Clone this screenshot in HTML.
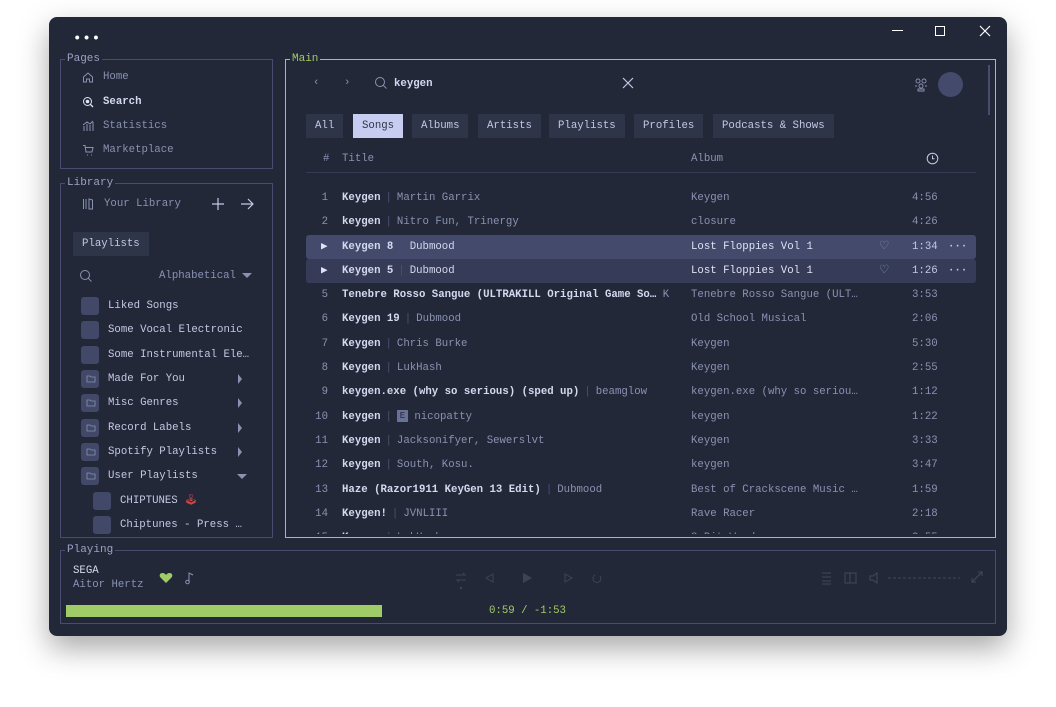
<!DOCTYPE html>
<html><head><meta charset="utf-8"><style>
*{margin:0;padding:0;box-sizing:border-box}
body{width:1056px;height:707px;background:#fff;position:relative;overflow:hidden;font-family:"Liberation Mono","DejaVu Sans Mono",monospace;font-size:10.7px;line-height:16px;color:#c3c9e4}
.win{position:absolute;left:49px;top:17px;width:958px;height:619px;background:#232839;border-radius:8px;box-shadow:0 12px 30px rgba(0,0,0,.35)}
.a{position:absolute;white-space:nowrap}
.box{position:absolute;border:1px solid #474d70}
.lbl{position:absolute;background:#232839;padding:0 2px;color:#9aa2c4;font-size:11px;line-height:12px}
.dim{color:#8a92b2}
.b{font-weight:bold;color:#d4d9ef}
.chip{position:absolute;top:114px;height:24px;background:#2f3549;line-height:25px;padding:0 9px;color:#c3c9e4}
.sq{position:absolute;width:18px;height:18px;background:#414868;border-radius:3px}
.row{position:absolute;left:306px;width:670px;height:23px}
.sep{color:#4a5072;margin:0 5px}
</style></head><body>
<div class="win"></div>
<div class="a" style="left:73px;top:31px;color:#fff;font-size:14px;letter-spacing:1px;font-weight:bold">•••</div>
<div class="a" style="left:892px;top:30px;width:11px;height:1px;background:#fff"></div>
<div class="a" style="left:935px;top:26px;width:10px;height:10px;border:1px solid #fff"></div>
<svg class="a" style="left:979px;top:25px" width="12" height="12"><path d="M1 1L11 11M11 1L1 11" stroke="#fff" stroke-width="1.2"/></svg>

<div class="box" style="left:60px;top:59px;width:213px;height:110px"></div>
<div class="lbl" style="left:65px;top:53px">Pages</div>
<svg class="a" style="left:82px;top:71px" width="12" height="12"><path d="M1.5 6L6 2L10.5 6V11H7.5V8H4.5V11H1.5Z" fill="none" stroke="#8a92b2"/></svg>
<div class="a dim" style="left:103px;top:69px">Home</div>
<svg class="a" style="left:82px;top:96px" width="12" height="12"><circle cx="5.5" cy="5.5" r="4" fill="none" stroke="#dfe3f5"/><circle cx="5.5" cy="5.5" r="1.8" fill="#dfe3f5"/><path d="M8.5 8.5L11 11" stroke="#dfe3f5" stroke-width="1.3"/></svg>
<div class="a b" style="left:103px;top:94px">Search</div>
<svg class="a" style="left:82px;top:120px" width="12" height="12"><path d="M2 11V6M5 11V4M8 11V5M11 11V2M1 5L5 2L8 4L11 1" stroke="#8a92b2" fill="none"/></svg>
<div class="a dim" style="left:103px;top:118px">Statistics</div>
<svg class="a" style="left:82px;top:144px" width="12" height="12"><path d="M1 1.5H3L4 8H10L11 3.5H3.5M5 11h1M9 11h1" stroke="#8a92b2" fill="none"/></svg>
<div class="a dim" style="left:103px;top:142px">Marketplace</div>

<div class="box" style="left:60px;top:183px;width:213px;height:355px"></div>
<div class="lbl" style="left:65px;top:177px">Library</div>
<svg class="a" style="left:82px;top:198px" width="12" height="12"><path d="M1.5 1V11M4 1V11M7 1L10.5 2V11H7Z" stroke="#8a92b2" fill="none"/></svg>
<div class="a dim" style="left:104px;top:196px">Your Library</div>
<svg class="a" style="left:211px;top:197px" width="14" height="14"><path d="M7 1V13M1 7H13" stroke="#c3c9e4" stroke-width="1.2"/></svg>
<svg class="a" style="left:240px;top:197px" width="15" height="14"><path d="M1 7H13M8 2L13 7L8 12" stroke="#c3c9e4" stroke-width="1.2" fill="none"/></svg>
<div class="a" style="left:73px;top:232px;width:76px;height:24px;background:#2f3549;line-height:25px;padding-left:9px">Playlists</div>
<svg class="a" style="left:79px;top:269px" width="14" height="14"><circle cx="6" cy="6" r="4.5" fill="none" stroke="#8a92b2"/><path d="M9.3 9.3L12.5 12.5" stroke="#8a92b2"/></svg>
<div class="a dim" style="left:159px;top:268px">Alphabetical</div>
<svg class="a" style="left:242px;top:273px" width="10" height="6"><path d="M0 0H10L5 5Z" fill="#8a92b2"/></svg>

<div class="sq" style="left:81px;top:297px"></div><div class="a" style="left:108px;top:298px">Liked Songs</div>
<div class="sq" style="left:81px;top:321px"></div><div class="a" style="left:108px;top:322px">Some Vocal Electronic</div>
<div class="sq" style="left:81px;top:346px"></div><div class="a" style="left:108px;top:347px">Some Instrumental Ele…</div>
<div class="sq" style="left:81px;top:370px"></div><div class="a" style="left:108px;top:371px">Made For You</div>
<div class="sq" style="left:81px;top:394px"></div><div class="a" style="left:108px;top:395px">Misc Genres</div>
<div class="sq" style="left:81px;top:419px"></div><div class="a" style="left:108px;top:420px">Record Labels</div>
<div class="sq" style="left:81px;top:443px"></div><div class="a" style="left:108px;top:444px">Spotify Playlists</div>
<div class="sq" style="left:81px;top:467px"></div><div class="a" style="left:108px;top:468px">User Playlists</div>
<svg class="a" style="left:86px;top:373px" width="10" height="110"><g fill="none" stroke="#8a92b2" stroke-width=".8"><path d="M1 3H4L5 4H9V9H1Z"/><path d="M1 27H4L5 28H9V33H1Z"/><path d="M1 52H4L5 53H9V58H1Z"/><path d="M1 76H4L5 77H9V82H1Z"/><path d="M1 100H4L5 101H9V106H1Z"/></g></svg>
<svg class="a" style="left:237px;top:374px" width="12" height="110"><g fill="#8a92b2"><path d="M1 0V10L5 5Z"/><path d="M1 24V34L5 29Z"/><path d="M1 49V59L5 54Z"/><path d="M1 73V83L5 78Z"/><path d="M0 100H10L5 105Z"/></g></svg>
<div class="sq" style="left:93px;top:492px"></div><div class="a" style="left:120px;top:493px">CHIPTUNES <span style="color:#c44">🕹</span></div>
<div class="sq" style="left:93px;top:516px"></div><div class="a" style="left:120px;top:517px">Chiptunes - Press …</div>

<div class="a" style="left:306px;top:186px;width:680px;line-height:24.3px;height:348px;overflow:hidden">
<div style="position:relative;height:24.3px"><span class="a dim" style="left:10px;width:12px;text-align:right">1</span><span class="a" style="left:36px"><span class="b">Keygen</span><span class="sep">|</span><span class="dim">Martin Garrix</span></span><span class="a dim" style="left:385px">Keygen</span><span class="a dim" style="left:606px">4:56</span></div>
<div style="position:relative;height:24.3px"><span class="a dim" style="left:10px;width:12px;text-align:right">2</span><span class="a" style="left:36px"><span class="b">keygen</span><span class="sep">|</span><span class="dim">Nitro Fun, Trinergy</span></span><span class="a dim" style="left:385px">closure</span><span class="a dim" style="left:606px">4:26</span></div>
<div style="position:relative;height:24.3px;background:#434a6b;border-radius:3px;width:670px"><span class="a" style="left:15px;color:#dfe3f5">▶</span><span class="a" style="left:36px"><span class="b">Keygen 8</span><span class="sep" style="color:#434a6b">|</span><span style="color:#d4d9ef">Dubmood</span></span><span class="a" style="left:385px;color:#dfe3f5">Lost Floppies Vol 1</span><span class="a dim" style="left:574px;font-size:14px">♡</span><span class="a" style="left:606px">1:34</span><span class="a" style="left:642px;font-weight:bold">···</span></div>
<div style="position:relative;height:24.3px;background:#363c57;border-radius:3px;width:670px"><span class="a" style="left:15px;color:#dfe3f5">▶</span><span class="a" style="left:36px"><span class="b">Keygen 5</span><span class="sep">|</span><span style="color:#d4d9ef">Dubmood</span></span><span class="a" style="left:385px;color:#dfe3f5">Lost Floppies Vol 1</span><span class="a dim" style="left:574px;font-size:14px">♡</span><span class="a" style="left:606px">1:26</span><span class="a" style="left:642px;font-weight:bold">···</span></div>
<div style="position:relative;height:24.3px"><span class="a dim" style="left:10px;width:12px;text-align:right">5</span><span class="a" style="left:36px"><span class="b">Tenebre Rosso Sangue (ULTRAKILL Original Game So…</span> <span class="dim">K</span></span><span class="a dim" style="left:385px">Tenebre Rosso Sangue (ULT…</span><span class="a dim" style="left:606px">3:53</span></div>
<div style="position:relative;height:24.3px"><span class="a dim" style="left:10px;width:12px;text-align:right">6</span><span class="a" style="left:36px"><span class="b">Keygen 19</span><span class="sep">|</span><span class="dim">Dubmood</span></span><span class="a dim" style="left:385px">Old School Musical</span><span class="a dim" style="left:606px">2:06</span></div>
<div style="position:relative;height:24.3px"><span class="a dim" style="left:10px;width:12px;text-align:right">7</span><span class="a" style="left:36px"><span class="b">Keygen</span><span class="sep">|</span><span class="dim">Chris Burke</span></span><span class="a dim" style="left:385px">Keygen</span><span class="a dim" style="left:606px">5:30</span></div>
<div style="position:relative;height:24.3px"><span class="a dim" style="left:10px;width:12px;text-align:right">8</span><span class="a" style="left:36px"><span class="b">Keygen</span><span class="sep">|</span><span class="dim">LukHash</span></span><span class="a dim" style="left:385px">Keygen</span><span class="a dim" style="left:606px">2:55</span></div>
<div style="position:relative;height:24.3px"><span class="a dim" style="left:10px;width:12px;text-align:right">9</span><span class="a" style="left:36px"><span class="b">keygen.exe (why so serious) (sped up)</span><span class="sep">|</span><span class="dim">beamglow</span></span><span class="a dim" style="left:385px">keygen.exe (why so seriou…</span><span class="a dim" style="left:606px">1:12</span></div>
<div style="position:relative;height:24.3px"><span class="a dim" style="left:4px;width:18px;text-align:right">10</span><span class="a" style="left:36px"><span class="b">keygen</span><span class="sep">|</span><span style="display:inline-block;width:11px;height:12px;background:#6a7196;color:#232839;font-size:9px;line-height:12px;text-align:center;vertical-align:middle">E</span> <span class="dim">nicopatty</span></span><span class="a dim" style="left:385px">keygen</span><span class="a dim" style="left:606px">1:22</span></div>
<div style="position:relative;height:24.3px"><span class="a dim" style="left:4px;width:18px;text-align:right">11</span><span class="a" style="left:36px"><span class="b">Keygen</span><span class="sep">|</span><span class="dim">Jacksonifyer, Sewerslvt</span></span><span class="a dim" style="left:385px">Keygen</span><span class="a dim" style="left:606px">3:33</span></div>
<div style="position:relative;height:24.3px"><span class="a dim" style="left:4px;width:18px;text-align:right">12</span><span class="a" style="left:36px"><span class="b">keygen</span><span class="sep">|</span><span class="dim">South, Kosu.</span></span><span class="a dim" style="left:385px">keygen</span><span class="a dim" style="left:606px">3:47</span></div>
<div style="position:relative;height:24.3px"><span class="a dim" style="left:4px;width:18px;text-align:right">13</span><span class="a" style="left:36px"><span class="b">Haze (Razor1911 KeyGen 13 Edit)</span><span class="sep">|</span><span class="dim">Dubmood</span></span><span class="a dim" style="left:385px">Best of Crackscene Music …</span><span class="a dim" style="left:606px">1:59</span></div>
<div style="position:relative;height:24.3px"><span class="a dim" style="left:4px;width:18px;text-align:right">14</span><span class="a" style="left:36px"><span class="b">Keygen!</span><span class="sep">|</span><span class="dim">JVNLIII</span></span><span class="a dim" style="left:385px">Rave Racer</span><span class="a dim" style="left:606px">2:18</span></div>
<div style="position:relative;height:24.3px"><span class="a dim" style="left:4px;width:18px;text-align:right">15</span><span class="a" style="left:36px"><span class="b">Keygen</span><span class="sep">|</span><span class="dim">LukHash</span></span><span class="a dim" style="left:385px">8-Bit Wonder</span><span class="a dim" style="left:606px">2:55</span></div>
</div>

<div class="box" style="left:285px;top:59px;width:711px;height:479px;border:1px solid #9fcc66"></div>
<div class="lbl" style="left:290px;top:53px;color:#9fcc66">Main</div>
<div class="a" style="left:988px;top:65px;width:2px;height:50px;background:#474d70"></div>
<div class="a dim" style="left:313px;top:75px">‹</div>
<div class="a dim" style="left:344px;top:75px">›</div>
<svg class="a" style="left:374px;top:76px" width="14" height="14"><circle cx="6" cy="6" r="4.5" fill="none" stroke="#8a92b2"/><path d="M9.3 9.3L12.5 12.5" stroke="#8a92b2"/></svg>
<div class="a b" style="left:394px;top:76px">keygen</div>
<svg class="a" style="left:622px;top:77px" width="12" height="12"><path d="M1 1L11 11M11 1L1 11" stroke="#c3c9e4" stroke-width="1.2"/></svg>
<svg class="a" style="left:914px;top:78px" width="14" height="14"><g fill="none" stroke="#8a92b2" stroke-width=".9"><circle cx="4" cy="3" r="2"/><circle cx="10" cy="3" r="2"/><circle cx="7" cy="8" r="2"/><path d="M1 8H3M11 8H13M4 13V11H10V13Z"/></g></svg>
<div class="a" style="left:938px;top:72px;width:25px;height:25px;border-radius:50%;background:#434a6b"></div>

<div class="chip" style="left:306px">All</div>
<div class="chip" style="left:353px;background:#c6cdf0;color:#2f3549">Songs</div>
<div class="chip" style="left:412px">Albums</div>
<div class="chip" style="left:478px">Artists</div>
<div class="chip" style="left:549px">Playlists</div>
<div class="chip" style="left:634px">Profiles</div>
<div class="chip" style="left:713px">Podcasts &amp; Shows</div>

<div class="a dim" style="left:323px;top:151px">#</div>
<div class="a dim" style="left:342px;top:151px">Title</div>
<div class="a dim" style="left:691px;top:151px">Album</div>
<svg class="a" style="left:926px;top:152px" width="13" height="13"><circle cx="6.5" cy="6.5" r="5.3" fill="none" stroke="#c3c9e4"/><path d="M6.5 3.5V6.8H8.5" stroke="#c3c9e4" fill="none"/></svg>
<div class="a" style="left:306px;top:172px;width:670px;height:1px;background:#353b55"></div>

<div class="box" style="left:60px;top:550px;width:936px;height:74px"></div>
<div class="lbl" style="left:65px;top:544px">Playing</div>
<div class="a" style="left:73px;top:563px;color:#d4d9ef">SEGA</div>
<div class="a dim" style="left:73px;top:577px">Aitor Hertz</div>
<svg class="a" style="left:159px;top:572px" width="14" height="12"><path d="M7 11L1.5 5.5C0 4 .5 1 3.5 1C5 1 6.5 2 7 3C7.5 2 9 1 10.5 1C13.5 1 14 4 12.5 5.5Z" fill="#9fcc66"/></svg>
<svg class="a" style="left:184px;top:571px" width="12" height="14"><path d="M5 11V2L9 4" stroke="#8a92b2" fill="none"/><circle cx="3.5" cy="11" r="1.8" fill="none" stroke="#8a92b2"/></svg>
<svg class="a" style="left:455px;top:570px" width="150" height="22" opacity=".25"><g stroke="#8a92b2" fill="none"><path d="M1 5H10L8 3M11 10H2L4 12"/><path d="M38 4V12L31 8Z"/><path d="M110 4V12L117 8Z"/><path d="M145 6A4 4 0 1 1 140 5"/></g><circle cx="6" cy="18" r="1.2" fill="#8a92b2"/><path d="M68 3V13L77 8Z" fill="#8a92b2"/></svg>
<svg class="a" style="left:820px;top:571px" width="150" height="14" opacity=".3"><g stroke="#8a92b2" fill="none"><path d="M2 2H11M2 6H11M2 10H11M2 13H11"/><rect x="25" y="2" width="11" height="10"/><path d="M30 2V12"/><path d="M50 5H53L57 2V12L53 9H50Z"/><path d="M68 7H140" stroke-dasharray="3 2"/></g></svg>
<svg class="a" style="left:971px;top:571px" width="12" height="12" opacity=".3"><path d="M1 11L11 1M7 1H11V5M1 7V11H5" stroke="#8a92b2" fill="none"/></svg>
<div class="a" style="left:66px;top:605px;width:316px;height:12px;background:#9fcc66"></div>
<div class="a" style="left:489px;top:603px;color:#9fcc66">0:59 / -1:53</div>
</body></html>
